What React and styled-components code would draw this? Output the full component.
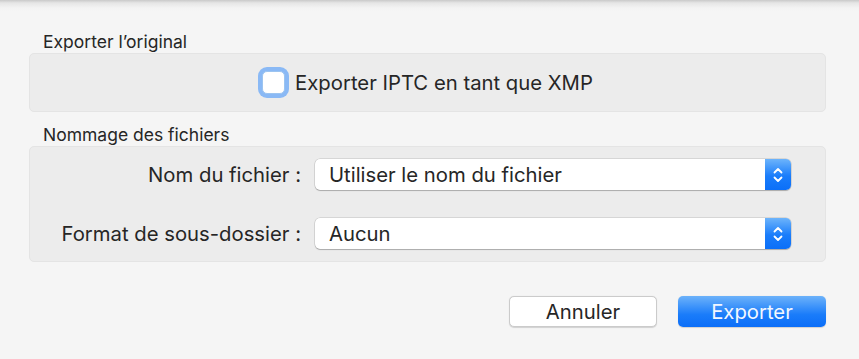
import React from "react";
import styled, { createGlobalStyle } from "styled-components";

const Global = createGlobalStyle`
  html, body {
    margin: 0;
    padding: 0;
    background: #f5f5f5;
  }
  body {
    font-family: Inter, "Liberation Sans", Arial, sans-serif;
    color: #262626;
  }
`;

function Stepper() {
  return (
    <Arrows>
      <svg width="12" height="18" viewBox="0 0 12 18">
        <path
          d="M2.5 6.5 L6 3 L9.5 6.5 M2.5 11.5 L6 15 L9.5 11.5"
          fill="none"
          stroke="#fff"
          strokeWidth="1.8"
          strokeLinecap="round"
          strokeLinejoin="round"
        />
      </svg>
    </Arrows>
  );
}

function Select({ value }) {
  return (
    <SelectBox>
      <SelectValue>{value}</SelectValue>
      <Stepper />
    </SelectBox>
  );
}

export default function App() {
  return (
    <>
      <Global />
      <Sheet>
        <SectionTitle>Exporter l’original</SectionTitle>
        <Group>
          <CheckRow>
            <Check />
            <CheckLabel>Exporter IPTC en tant que XMP</CheckLabel>
          </CheckRow>
        </Group>

        <SectionTitle $gap>Nommage des fichiers</SectionTitle>
        <Group $rows>
          <Row>
            <Label>Nom du fichier :</Label>
            <Select value="Utiliser le nom du fichier" />
          </Row>
          <Row>
            <Label>Format de sous-dossier :</Label>
            <Select value="Aucun" />
          </Row>
        </Group>

        <Buttons>
          <Button>Annuler</Button>
          <Button $primary>Exporter</Button>
        </Buttons>
      </Sheet>
    </>
  );
}

const Sheet = styled.div`
  width: 859px;
  height: 359px;
  box-sizing: border-box;
  padding: 32px 33px 0 29px;
  background: linear-gradient(#c9c9c9 0px, #e6e6e6 3px, #f3f3f3 8px, #f5f5f5 12px);
  display: flex;
  flex-direction: column;
`;

const SectionTitle = styled.div`
  font-size: 17.5px;
  line-height: 20px;
  padding-left: 14px;
  margin-top: ${(p) => (p.$gap ? "13px" : "0")};
  margin-bottom: 1px;
`;

const Group = styled.div`
  background: #ececec;
  border: 1px solid #e4e4e4;
  border-radius: 5px;
  box-sizing: border-box;
  height: ${(p) => (p.$rows ? "116px" : "59px")};
  display: flex;
  flex-direction: column;
  justify-content: ${(p) => (p.$rows ? "flex-start" : "center")};
  padding: ${(p) => (p.$rows ? "12px 34px 0 0" : "0")};
  gap: 28px;
`;

const CheckRow = styled.div`
  display: flex;
  align-items: center;
  justify-content: center;
  gap: 10px;
`;

const Check = styled.div`
  width: 23px;
  height: 23px;
  box-sizing: border-box;
  background: #fff;
  border-radius: 5px;
  border: 1px solid #9cc4f0;
  box-shadow: 0 0 0 4px #8ab9f5;
`;

const CheckLabel = styled.span`
  font-size: 20.3px;
  line-height: 24px;
`;

const Row = styled.div`
  display: flex;
  align-items: center;
  gap: 14px;
`;

const Label = styled.div`
  width: 271px;
  text-align: right;
  font-size: 20.3px;
  line-height: 24px;
`;

const SelectBox = styled.div`
  flex: 1;
  height: 31px;
  box-sizing: border-box;
  background: #fff;
  border-radius: 5px;
  box-shadow: 0 0 0 0.5px rgba(0, 0, 0, 0.18), 0 1px 1px rgba(0, 0, 0, 0.2);
  display: flex;
  align-items: stretch;
  overflow: hidden;
`;

const SelectValue = styled.div`
  flex: 1;
  padding-left: 14px;
  font-size: 20.3px;
  line-height: 31px;
`;

const Arrows = styled.div`
  width: 26px;
  background: linear-gradient(#6db4fb, #1a7dfb 55%, #0b6ff8);
  display: flex;
  align-items: center;
  justify-content: center;
`;

const Buttons = styled.div`
  display: flex;
  justify-content: flex-end;
  gap: 21px;
  margin-top: 34px;
`;

const Button = styled.button`
  width: 148px;
  height: 31px;
  box-sizing: border-box;
  font-family: inherit;
  font-size: 20.3px;
  border-radius: 5px;
  cursor: pointer;
  color: ${(p) => (p.$primary ? "#f2f7ff" : "#262626")};
  border: ${(p) => (p.$primary ? "none" : "1px solid #cbcbcb")};
  background: ${(p) =>
    p.$primary ? "linear-gradient(#6cb2fa, #1a7cfa 60%, #0b6ef8)" : "#fff"};
  box-shadow: 0 0.5px 1px rgba(0, 0, 0, 0.15);
  padding: 0;
`;
